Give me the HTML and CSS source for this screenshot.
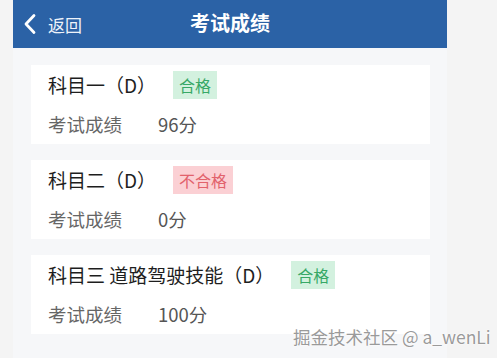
FILE: index.html
```html
<!DOCTYPE html>
<html lang="zh">
<head>
<meta charset="utf-8">
<link rel="stylesheet" href="styles.css">
</head>
<body>
<div class="app">
  <header class="nav">
    <div class="back">
      <svg class="chev" width="14" height="22" viewBox="0 0 14 22"><path d="M11 2.5 L3 11 L11 19.5" fill="none" stroke="#fff" stroke-width="2.8" stroke-linecap="round" stroke-linejoin="round"/></svg>
      <span class="back-text">返回</span>
    </div>
    <h1 class="title">考试成绩</h1>
  </header>
  <main class="list">
    <section class="card">
      <div class="row-title">
        <span class="subject">科目一（D）</span>
        <span class="tag pass">合格</span>
      </div>
      <div class="row-score">
        <span class="label">考试成绩</span>
        <span class="score">96分</span>
      </div>
    </section>
    <section class="card">
      <div class="row-title">
        <span class="subject">科目二（D）</span>
        <span class="tag fail">不合格</span>
      </div>
      <div class="row-score">
        <span class="label">考试成绩</span>
        <span class="score">0分</span>
      </div>
    </section>
    <section class="card">
      <div class="row-title">
        <span class="subject">科目三 道路驾驶技能（D）</span>
        <span class="tag pass">合格</span>
      </div>
      <div class="row-score">
        <span class="label">考试成绩</span>
        <span class="score">100分</span>
      </div>
    </section>
  </main>
</div>
<div class="watermark">掘金技术社区 @ a_wenLi</div>
</body>
</html>
```

FILE: styles.css
```css
html, body {
  margin: 0;
  padding: 0;
}
body {
  background: #f4f4f4;
  width: 497px;
  height: 358px;
  overflow: hidden;
  position: relative;
  font-family: "Noto Sans CJK SC", "Noto Sans", sans-serif;
}
.app {
  margin-left: 13px;
  width: 434px;
  height: 358px;
  background: #f6f7f9;
}
.nav {
  height: 48px;
  background: #2b62a6;
  display: flex;
  align-items: center;
  position: relative;
}
.back {
  display: flex;
  align-items: center;
  padding-left: 10px;
  gap: 11px;
}
.chev {
  display: block;
}
.back-text {
  color: #eef3fa;
  font-size: 17px;
  line-height: 1;
}
.title {
  position: absolute;
  left: 0;
  right: 0;
  top: 0;
  margin: 0;
  text-align: center;
  line-height: 46px;
  font-size: 20px;
  font-weight: 700;
  color: #fff;
}
.list {
  display: flex;
  flex-direction: column;
  gap: 16px;
  padding: 17px 17px 0 18px;
}
.card {
  background: #fff;
  padding: 6px 17px 5px;
  height: 79px;
  box-sizing: border-box;
}
.row-title {
  display: flex;
  align-items: center;
  height: 28px;
}
.subject {
  font-size: 19px;
  color: #1e1e1e;
  line-height: 28px;
}
.tag {
  margin-left: 17px;
  height: 28px;
  line-height: 28px;
  padding: 0 6px;
  font-size: 16px;
}
.pass {
  background: #d3f1df;
  color: #37a866;
}
.fail {
  background: #fbd0d4;
  color: #e2626c;
}
.row-score {
  display: flex;
  align-items: center;
  margin-top: 12px;
  height: 26px;
}
.label {
  font-size: 18.5px;
  color: #666;
  width: 110px;
}
.score {
  font-size: 18.5px;
  color: #555;
}
.watermark {
  position: absolute;
  left: 293px;
  top: 324px;
  font-size: 17.5px;
  color: #9a9a9a;
  white-space: nowrap;
  text-shadow: 0 0 2px #fff, 0 0 2px #fff, 0 0 1px #fff;
}
```
